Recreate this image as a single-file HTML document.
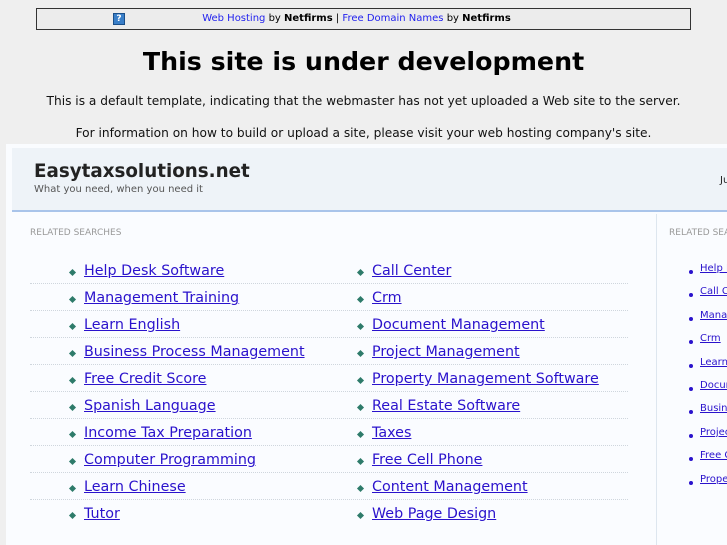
<!DOCTYPE html>
<html><head><meta charset="utf-8"><style>
*{margin:0;padding:0;box-sizing:border-box}
body{width:727px;height:545px;overflow:hidden;background:#efefef;font-family:"DejaVu Sans","Liberation Sans",sans-serif;position:relative}
.a{position:absolute;white-space:nowrap}
.bar{left:36px;top:8px;width:655px;height:22px;border:1px solid #333;background:#ececec;font-size:10px;text-align:center;line-height:20px;text-indent:-14px}
.bar a{color:#2222ee}
h1{position:absolute;left:0;width:727px;top:47px;text-align:center;font-size:25.3px;font-weight:bold;color:#000}
.p{left:0;width:727px;text-align:center;font-size:12.2px;color:#111}
.panel{left:6px;top:144px;width:721px;height:401px;background:#fafcff;overflow:hidden}
.hd{left:12px;top:148px;width:715px;height:64px;background:#eef3f8;border-bottom:2px solid #a9c4ea}
.lk{font-size:14.3px;color:#2a12cc;text-decoration:underline}
.bl{width:5px;height:5px;background:#2e7b6a;transform:rotate(45deg)}
.sep{left:30px;width:598px;border-top:1px dotted #cfd6dd}
.sl{font-size:10px;color:#2a12cc;text-decoration:underline}
.sb{width:4px;height:4px;background:#2a12cc;border-radius:50%}
</style></head><body>
<div class="a bar"><span style="position:absolute;left:76px;top:4px;width:12px;height:12px;background:#3a7fc8;border:1px solid #1a4f8a;color:#fff;font-size:9px;line-height:10px;font-weight:bold;text-indent:0">?</span><a>Web Hosting</a> by <b>Netfirms</b> | <a>Free Domain Names</a> by <b>Netfirms</b></div>
<h1>This site is under development</h1>
<div class="a p" style="top:94px">This is a default template, indicating that the webmaster has not yet uploaded a Web site to the server.</div>
<div class="a p" style="top:126px">For information on how to build or upload a site, please visit your web hosting company's site.</div>
<div class="a panel"></div>
<div class="a hd"></div>
<div class="a" style="left:34px;top:161px;font-size:18.3px;font-weight:bold;color:#222">Easytaxsolutions.net</div>
<div class="a" style="left:34px;top:184px;font-size:10px;color:#555">What you need, when you need it</div>
<div class="a" style="left:720px;top:175px;font-size:10px;color:#222">Ju</div>
<div class="a" style="left:30px;top:228px;font-size:9px;color:#999">RELATED SEARCHES</div>
<div class="a" style="left:656px;top:214px;height:331px;border-left:1px solid #dde6ef"></div>
<div class="a" style="left:669px;top:228px;font-size:9px;color:#999">RELATED SEARCHES</div>
<div id="c"></div>
<script>
var L=["Help Desk Software","Management Training","Learn English","Business Process Management","Free Credit Score","Spanish Language","Income Tax Preparation","Computer Programming","Learn Chinese","Tutor"];
var R=["Call Center","Crm","Document Management","Project Management","Property Management Software","Real Estate Software","Taxes","Free Cell Phone","Content Management","Web Page Design"];
var S=["Help Desk Software","Call Center","Management Training","Crm","Learn English","Document Management","Business Process Management","Project Management","Free Credit Score","Property Management Software"];
var h="";
for(var i=0;i<10;i++){var y=270+27*i;
h+='<div class="a bl" style="left:70px;top:'+(y)+'px"></div><div class="a lk" style="left:84px;top:'+(y-7)+'px">'+L[i]+'</div>';
h+='<div class="a bl" style="left:358px;top:'+(y)+'px"></div><div class="a lk" style="left:372px;top:'+(y-7)+'px">'+R[i]+'</div>';
if(i<9)h+='<div class="a sep" style="top:'+(y+13)+'px"></div>';
var z=270+23.4*i;
h+='<div class="a sb" style="left:689px;top:'+(z)+'px"></div><div class="a sl" style="left:700px;top:'+(z-7)+'px">'+S[i]+'</div>';}
document.getElementById("c").innerHTML=h;
</script>
</body></html>
